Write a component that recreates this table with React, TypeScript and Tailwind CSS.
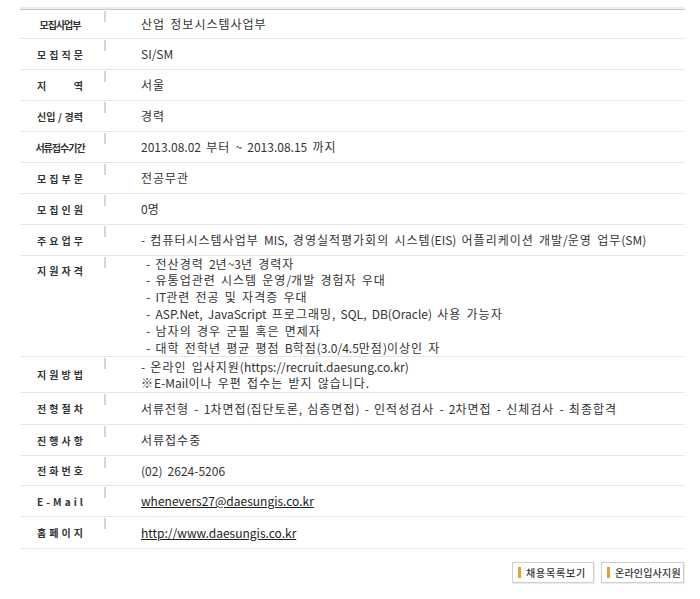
import React from 'react';

type Row = {
    label: string;
    lines: React.ReactNode[];
    h: string;
    top?: boolean;
};

// hangul runs get a little extra tracking so they take the full 12px cell
function Ko({ text }: { text: string }) {
    const parts = text.split(/([\uAC00-\uD7A3※]+)/);
    return (
        <>
            {parts.map((p, i) =>
                /[\uAC00-\uD7A3※]/.test(p) ? (
                    <span key={i} className="tracking-[1px]">
                        {p}
                    </span>
                ) : (
                    <span key={i}>{p}</span>
                )
            )}
        </>
    );
}

const rows: Row[] = [
    { label: '모집사업부', h: 'h-[29px]', lines: ['산업 정보시스템사업부'] },
    { label: '모 집 직 문', h: 'h-[31px]', lines: ['SI/SM'] },
    { label: '지 역', h: 'h-[31px]', lines: ['서울'] },
    { label: '신입 / 경력', h: 'h-[31px]', lines: ['경력'] },
    {
        label: '서류접수기간',
        h: 'h-[31px]',
        lines: ['2013.08.02 부터 ~ 2013.08.15 까지'],
    },
    { label: '모 집 부 문', h: 'h-[31px]', lines: ['전공무관'] },
    { label: '모 집 인 원', h: 'h-[31px]', lines: ['0명'] },
    {
        label: '주 요 업 무',
        h: 'h-[31px]',
        lines: [
            '- 컴퓨터시스템사업부 MIS, 경영실적평가회의 시스템(EIS) 어플리케이션 개발/운영 업무(SM)',
        ],
    },
    {
        label: '지 원 자 격',
        h: 'h-[101px]',
        top: true,
        lines: [
            '\u00a0- 전산경력 2년~3년 경력자',
            '\u00a0- 유통업관련 시스템 운영/개발 경험자 우대',
            '\u00a0- IT관련 전공 및 자격증 우대',
            '\u00a0- ASP.Net, JavaScript 프로그래밍, SQL, DB(Oracle) 사용 가능자',
            '\u00a0- 남자의 경우 군필 혹은 면제자',
            '\u00a0- 대학 전학년 평균 평점 B학점(3.0/4.5만점)이상인 자',
        ],
    },
    {
        label: '지 원 방 법',
        h: 'h-[36px]',
        lines: [
            '- 온라인 입사지원(https://recruit.daesung.co.kr)',
            '※E-Mail이나 우편 접수는 받지 않습니다.',
        ],
    },
    {
        label: '전 형 절 차',
        h: 'h-[32px]',
        lines: [
            '서류전형 - 1차면접(집단토론, 심층면접) - 인적성검사 - 2차면접 - 신체검사 - 최종합격',
        ],
    },
    { label: '진 행 사 항', h: 'h-[31px]', lines: ['서류접수중'] },
    { label: '전 화 번 호', h: 'h-[30px]', lines: ['(02) 2624-5206'] },
    {
        label: 'E - M a i l',
        h: 'h-[31px]',
        lines: [
            <a href="#" className="underline text-[#222]">
                whenevers27@daesungis.co.kr
            </a>,
        ],
    },
    {
        label: '홈 페 이 지',
        h: 'h-[32px]',
        lines: [
            <a href="#" className="underline text-[#222]">
                http://www.daesungis.co.kr
            </a>,
        ],
    },
];

function Label({ text }: { text: string }) {
    const parts = text.split(' ');
    if (parts.length === 1) {
        return (
            <div className="w-[46px] flex justify-center whitespace-nowrap tracking-[-1px]">
                {text}
            </div>
        );
    }
    return (
        <div className="w-[46px] flex justify-between whitespace-nowrap">
            {parts.map((p, i) => (
                <span key={i}>{p}</span>
            ))}
        </div>
    );
}

function Button({
    children,
    className,
}: {
    children: React.ReactNode;
    className: string;
}) {
    return (
        <button
            className={`h-[21px] pl-[5px] flex items-center gap-[5px] bg-white border border-[#cfcfcf] shadow-[1px_1px_1px_rgba(0,0,0,0.08)] text-[10px] font-medium text-[#333] ${className}`}
        >
            <span className="w-[3px] h-[11px] bg-[#e3a23a]" />
            {children}
        </button>
    );
}

export default function App() {
    return (
        <div
            className="w-[700px] h-[599px] bg-white pt-[7px] text-[#333]"
            style={{ fontFamily: '"Noto Sans CJK KR", "Noto Sans", sans-serif' }}
        >
            <div className="ml-[20px] w-[665px]">
                <div className="h-[2px] bg-[#ececec]" />
                <div className="h-[1px] bg-[#c9c9c9]" />
                {rows.map((row) => (
                    <div
                        key={row.label}
                        className={`flex border-b border-[#e6e6e6] ${row.h}`}
                    >
                        <div
                            className={`w-[84px] shrink-0 flex pl-[17px] text-[10px] font-bold text-[#333] ${
                                row.top ? 'items-start pt-[7px]' : 'items-center'
                            }`}
                        >
                            <Label text={row.label} />
                        </div>
                        <div className="w-[2px] h-[11px] bg-[#d6d6d6] shrink-0 mt-[1px]" />
                        <div
                            className={`pl-[35px] flex flex-col justify-center text-[12px] text-[#333] [word-spacing:2.5px] ${
                                row.top ? 'leading-[16.8px]' : 'leading-[16px]'
                            }`}
                        >
                            {row.lines.map((l, i) => (
                                <div key={i} className="whitespace-nowrap">
                                    {typeof l === 'string' ? <Ko text={l} /> : l}
                                </div>
                            ))}
                        </div>
                    </div>
                ))}
                <div className="flex justify-end gap-[7px] mt-[13px] pr-[1px]">
                    <Button className="w-[82px] tracking-[0.8px]">
                        채용목록보기
                    </Button>
                    <Button className="w-[83px] tracking-[0.2px]">
                        온라인입사지원
                    </Button>
                </div>
            </div>
        </div>
    );
}
